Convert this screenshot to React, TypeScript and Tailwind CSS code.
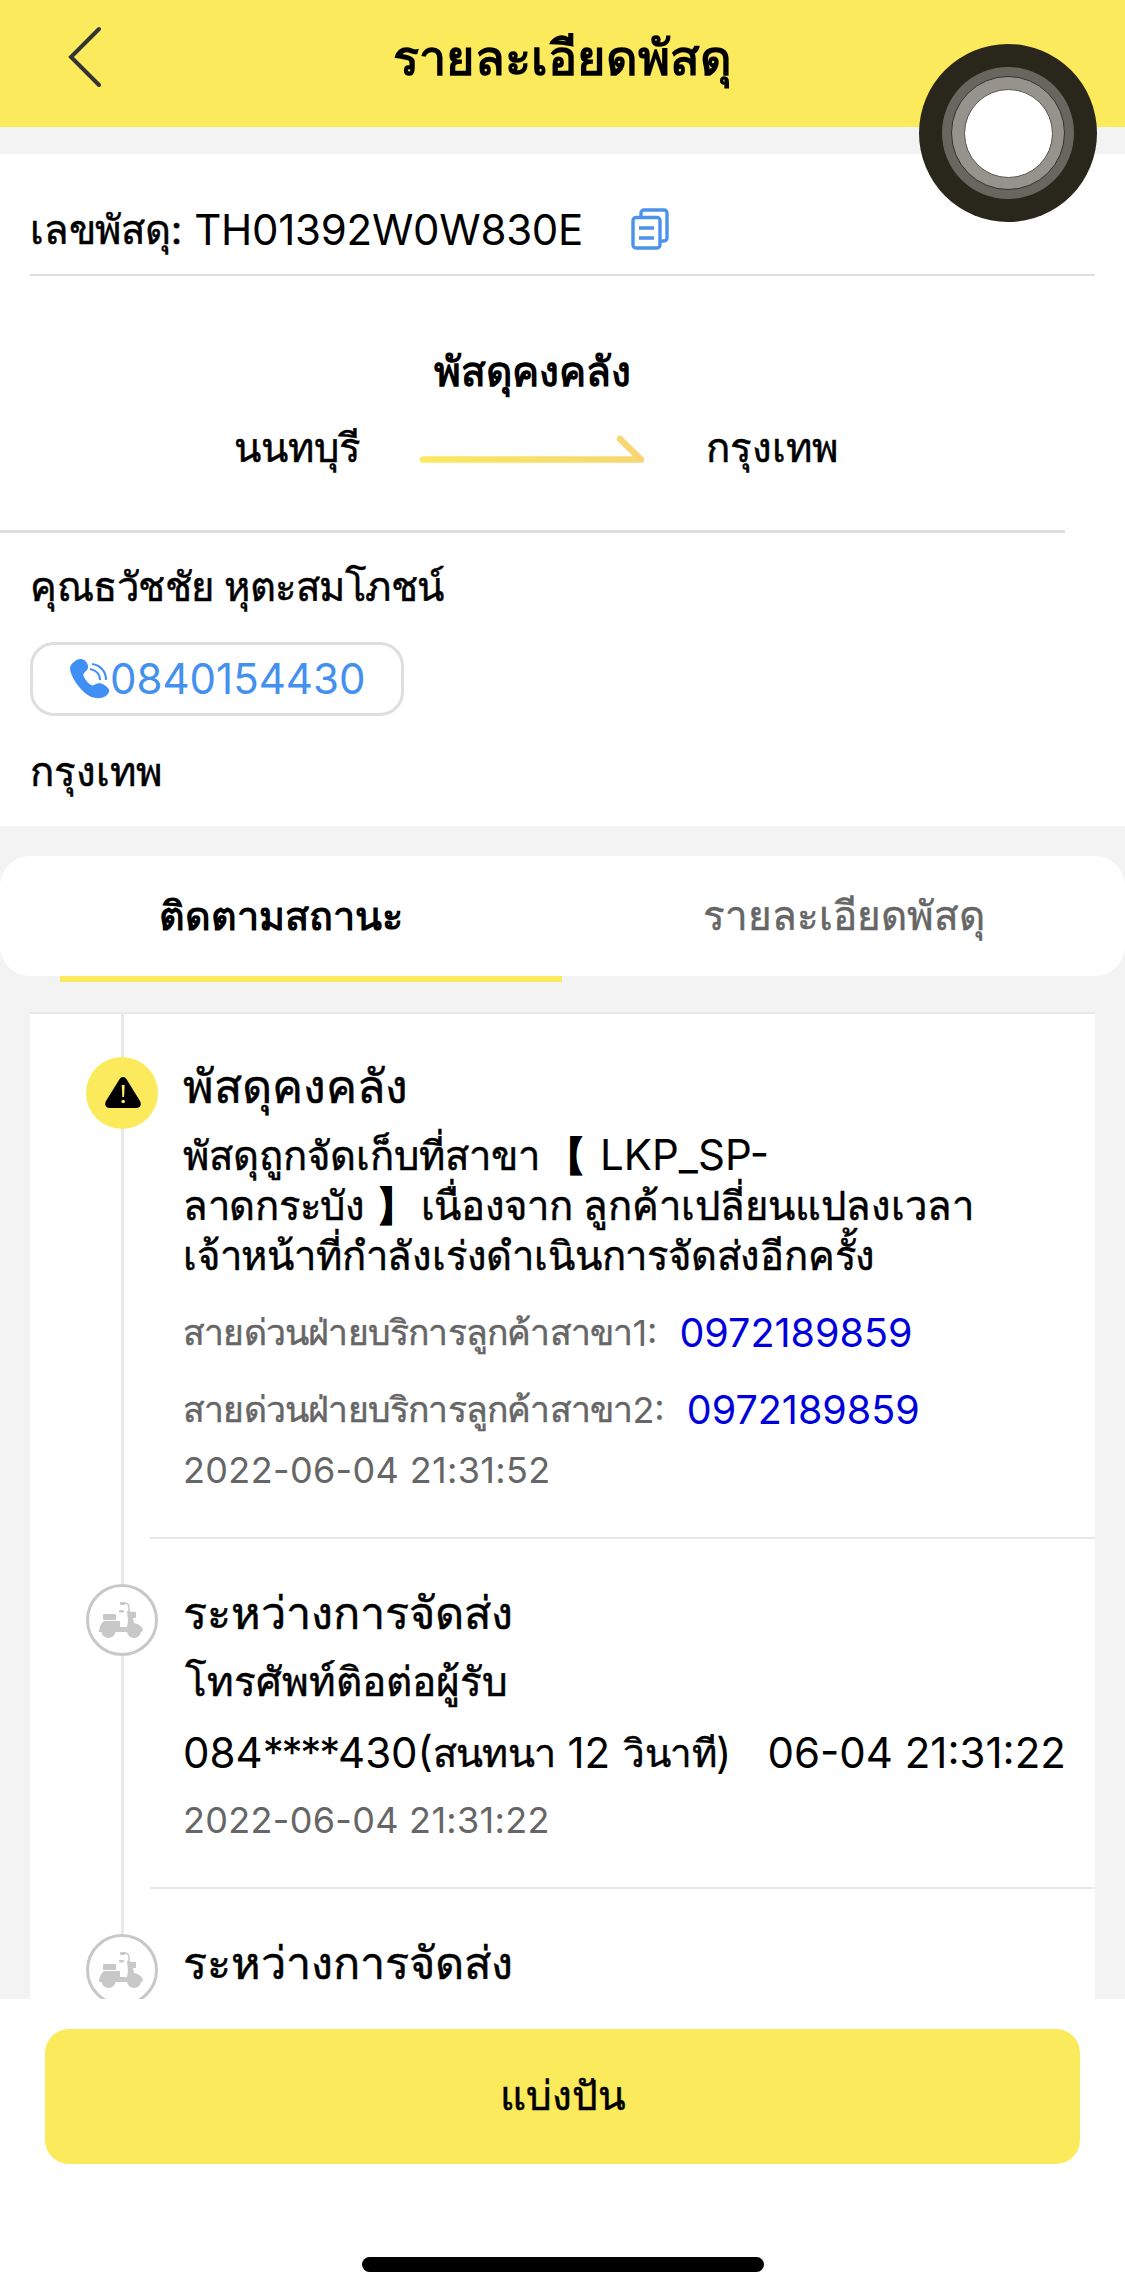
import type { ReactNode } from "react";

// Thai glyphs get a hairline stroke, latin text and digits stay plain
const latin = "[-webkit-text-stroke:0px]";

function ScooterIcon() {
  return (
    <svg width="46" height="38" viewBox="0 0 46 38" fill="#c8c8c8">
      <rect x="4" y="13" width="13" height="6" rx="1" />
      <path d="M5 20h16v6h7l1-6-1-10h3l1 1h5v6h-3l1 5c5 1 9 4 9 8l-2 1H0c0-4 2-9 5-11z" />
      <path d="M30 12V6c0-3-2-4-5-4" fill="none" stroke="#c8c8c8" strokeWidth="1.5" />
      <rect x="21" y="1" width="5" height="3" rx="1" />
      <rect x="20" y="9" width="5" height="2.5" rx="1" />
      <circle cx="9.5" cy="30" r="7" />
      <circle cx="35" cy="30" r="7" />
    </svg>
  );
}

function WarningIcon() {
  return (
    <svg className="ml-0.5" width="36" height="32" viewBox="0 0 36 32">
      <path d="M14 3c2-4 6-4 8 0l13 21c2 4 0 7-4 7H5c-4 0-6-3-4-7z" fill="#000" />
      <path d="M16.7 8h3l-.6 12h-1.8z" fill="#fbea5c" />
      <circle cx="18.2" cy="24.5" r="1.8" fill="#fbea5c" />
    </svg>
  );
}

function CopyIcon() {
  return (
    <svg width="38" height="42" viewBox="0 0 38 42" fill="none" stroke="#4b93ea" strokeWidth="3.4">
      <path d="M10 9V5a3 3 0 0 1 3-3h20a3 3 0 0 1 3 3v25a3 3 0 0 1-3 3h-3" />
      <rect x="2" y="9.5" width="27" height="30.5" rx="3" />
      <path d="M8 20h15M8 30h15" />
    </svg>
  );
}

function PhoneIcon() {
  return (
    <svg width="40" height="40" viewBox="0 0 40 40">
      <path
        d="M4 3c4-4 10-4 13 1 2 4 1 7-2 9-2 2-2 3-1 5 2 4 4 6 7 8 2 1 3 0 5-1 4-2 8 0 12 4 2 3 1 5-1 7-6 5-15 4-22-2C7 27 1 17 0 10c0-3 1-5 4-7z"
        fill="#3f8ff5"
      />
      <path d="M20 10c6 1 10 5 10 11M22 5c8 1 14 7 14 16" fill="none" stroke="#3f8ff5" strokeWidth="2" />
    </svg>
  );
}

function TimelineItem({ icon, active, last, children }: { icon: ReactNode; active?: boolean; last?: boolean; children: ReactNode }) {
  return (
    <div className="flex shrink-0">
      <div className="relative ml-14 -mr-2 flex w-[72px] flex-col items-center">
        <div className="h-[45px] w-[3px] bg-[#e8e8e8]" />
        <div
          className={
            active
              ? "flex size-[72px] shrink-0 items-center justify-center rounded-full bg-[#fbea5c]"
              : "flex size-[72px] shrink-0 items-center justify-center rounded-full border-[3px] border-[#c8c8c8] bg-white"
          }
        >
          {icon}
        </div>
        {!last && <div className="w-[3px] flex-1 bg-[#e8e8e8]" />}
      </div>
      <div className="flex-1 whitespace-nowrap border-b-2 border-[#e8e8e8] pl-[33px] pt-[44px]">{children}</div>
    </div>
  );
}

const hotlines = [
  { label: "สายด่วนฝ่ายบริการลูกค้าสาขา", no: "1:", phone: "0972189859" },
  { label: "สายด่วนฝ่ายบริการลูกค้าสาขา", no: "2:", phone: "0972189859" },
];

export default function App() {
  return (
    <div className="relative flex h-[2295px] w-[1125px] flex-col overflow-hidden bg-[#f3f3f3] font-['Inter',sans-serif] text-[40px] leading-[50px] text-black [-webkit-text-stroke:0.5px]">
      <header className="flex h-[127px] shrink-0 bg-[#fbea5c]">
        <svg className="ml-[68px] mt-[26px]" width="36" height="62" viewBox="0 0 36 62" fill="none" stroke="#333" strokeWidth="4" strokeLinecap="round">
          <path d="M31 3L3 31l28 28" />
        </svg>
        <h1 className="ml-[289px] mt-[28px] h-[60px] text-[48.7px] font-bold leading-[60px] [-webkit-text-stroke:0px]">รายละเอียดพัสดุ</h1>
      </header>

      <section className="mt-[27px] h-[672px] shrink-0 bg-white">
        <div className="mx-[30px] flex h-[122px] items-end border-b-2 border-[#dedede] pb-[19px]">
          <span className="tracking-[-0.2px]">เลขพัสดุ:</span>
          <span className={`${latin} ml-[12px] text-[42px] tracking-[-0.25px]`}>TH01392W0W830E</span>
          <div className="mb-[5px] ml-[48px]"><CopyIcon /></div>
        </div>

        <div className="mr-[60px] h-[257px] border-b-[3px] border-[#dedede] pt-[71px]">
          <p className="text-center text-[40.7px] font-bold [-webkit-text-stroke:0px]">พัสดุคงคลัง</p>
          <div className="mt-[26px] flex">
            <span className="ml-[234px] w-[186px]">นนทบุรี</span>
            <svg className="mt-[11px]" width="226" height="30" viewBox="0 0 226 30">
              <defs>
                <linearGradient id="route" x1="0" x2="226" y1="0" y2="0" gradientUnits="userSpaceOnUse">
                  <stop offset="0" stopColor="#fbe95e" />
                  <stop offset="1" stopColor="#f8d574" />
                </linearGradient>
              </defs>
              <path d="M3 25.5h218L200 5" fill="none" stroke="url(#route)" strokeWidth="6.5" strokeLinecap="round" strokeLinejoin="round" />
            </svg>
            <span className="ml-[60px] text-[40.2px]">กรุงเทพ</span>
          </div>
        </div>

        <div className="px-[30px] pt-[29px]">
          <p className="tracking-[-0.5px]">คุณธวัชชัย หุตะสมโภชน์</p>
          <a className={`${latin} mt-[30px] flex h-[74px] w-[374px] items-center rounded-[24px] border-[3px] border-[#dedede] pl-[37px] text-[42px] text-[#4390ee]`}>
            <PhoneIcon />
            <span>0840154430</span>
          </a>
          <p className="mt-[31px] text-[40.2px]">กรุงเทพ</p>
        </div>
      </section>

      <nav className="mt-[30px] flex h-[120px] shrink-0 rounded-[30px] bg-white text-center leading-[120px]">
        <div className="ml-[60px] h-[126px] w-[502px] border-b-[6px] border-[#fbea5c] pr-[61px] text-[39.5px] font-bold [-webkit-text-stroke:0px]">ติดตามสถานะ</div>
        <div className="flex-1 text-[40.4px] text-[#666]">รายละเอียดพัสดุ</div>
      </nav>

      <main className="mx-[30px] mt-[36px] flex h-[987px] shrink-0 flex-col overflow-hidden bg-white shadow-[inset_0_2px_0_#e8e8e8]">
        <TimelineItem active icon={<WarningIcon />}>
          <h2 className="text-[46.5px] leading-[60px]">พัสดุคงคลัง</h2>
          <div className="mt-[14px]">
            <p>
              พัสดุถูกจัดเก็บที่สาขา
              <span className="ml-[6px] font-bold">【</span>
              <span className={`${latin} ml-[14px] text-[42px]`}>LKP_SP-</span>
            </p>
            <p>
              <span className="tracking-[-0.3px]">ลาดกระบัง </span>
              <span className="font-bold">】</span>
              <span className="ml-[5px] tracking-[-0.3px]">เนื่องจาก </span>
              <span>ลูกค้าเปลี่ยนแปลงเวลา</span>
            </p>
            <p className="tracking-[-0.2px]">เจ้าหน้าที่กำลังเร่งดำเนินการจัดส่งอีกครั้ง</p>
          </div>
          <div className="mt-[27px] flex flex-col gap-[27px]">
            {hotlines.map((h) => (
              <p key={h.no} className="flex text-[36px] text-[#666]">
                <span className="text-[35.5px] tracking-[-0.8px]">{h.label}</span>
                <span className={latin}>{h.no}</span>
                <a className={`${latin} ml-[22px] text-[39.5px] text-[#0000dd]`}>{h.phone}</a>
              </p>
            ))}
          </div>
          <p className={`${latin} mb-[42px] mt-[10px] text-[36px] tracking-[0.35px] text-[#666]`}>2022-06-04 21:31:52</p>
        </TimelineItem>

        <TimelineItem icon={<ScooterIcon />}>
          <h2 className="text-[45px] leading-[60px]">ระหว่างการจัดส่ง</h2>
          <p className="mt-[14px] pl-0.5 text-[40.5px]">โทรศัพท์ติอต่อผู้รับ</p>
          <p className={`${latin} mt-[21px] flex text-[42px]`}>
            <span>084</span>
            <span className="tracking-[-2.2px]">****</span>
            <span>430(</span>
            <span className="text-[39.5px] tracking-[-0.7px] [-webkit-text-stroke:0.5px]">สนทนา</span>
            <span className="ml-[12px]">12</span>
            <span className="ml-[13px] text-[38.5px] tracking-[-0.5px] [-webkit-text-stroke:0.5px]">วินาที</span>
            <span>)</span>
            <span className="ml-[36px]">06-04 21:31:22</span>
          </p>
          <p className={`${latin} mb-[42px] mt-[17px] text-[36px] tracking-[0.3px] text-[#666]`}>2022-06-04 21:31:22</p>
        </TimelineItem>

        <TimelineItem last icon={<ScooterIcon />}>
          <h2 className="text-[45px] leading-[60px]">ระหว่างการจัดส่ง</h2>
        </TimelineItem>
      </main>

      <footer className="flex flex-1 flex-col items-center bg-white pt-[30px]">
        <button className="h-[135px] w-[1035px] rounded-[24px] bg-[#fbea5c] pb-[2px] text-[40.5px]">แบ่งปัน</button>
        <div className="mt-[93px] h-[15px] w-[402px] rounded-full bg-black" />
      </footer>

      {/* floating assistive button */}
      <div className="absolute left-[919px] top-[44px] flex size-[178px] items-center justify-center rounded-full bg-[#29261b]">
        <div className="flex size-[132px] items-center justify-center rounded-full bg-[#68675f]">
          <div className="flex size-[114px] items-center justify-center rounded-full border border-[#33322a] bg-[#95938c]">
            <div className="size-[89px] rounded-full border border-[#55544e] bg-white" />
          </div>
        </div>
      </div>
    </div>
  );
}
